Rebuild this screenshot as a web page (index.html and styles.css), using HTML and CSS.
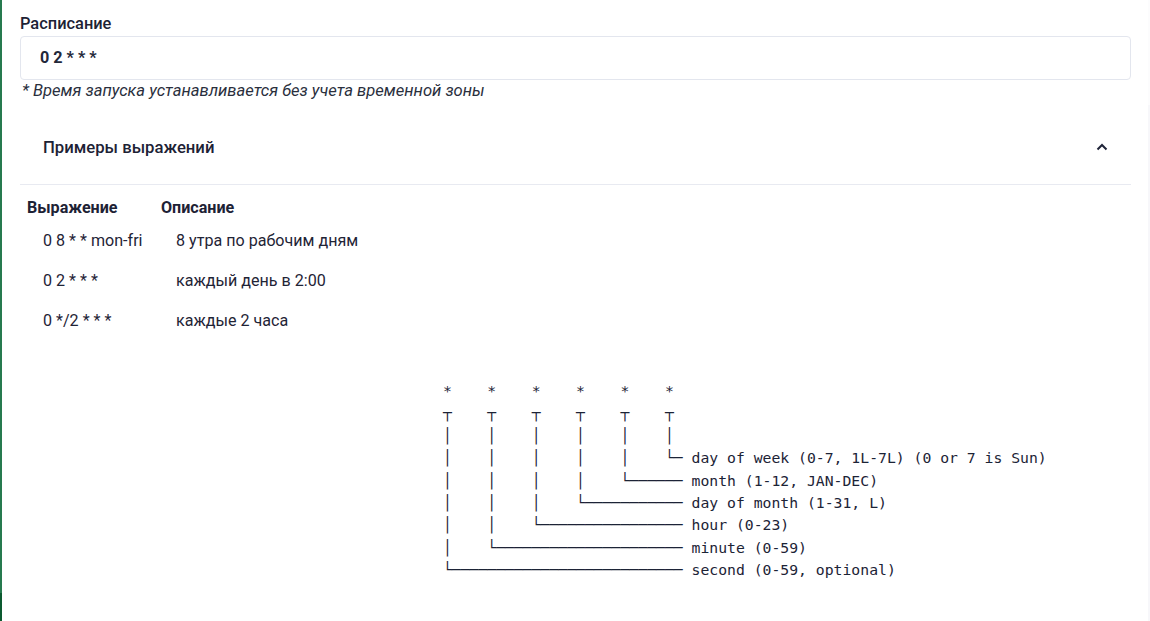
FILE: index.html
```html
<!DOCTYPE html>
<html lang="ru">
<head>
<meta charset="utf-8">
<title>Расписание</title>
<link rel="stylesheet" href="styles.css">
</head>
<body>
<div class="layout">
  <div class="sidebar-edge"><div class="edge-top"></div><div class="edge-bottom"></div></div>
  <main class="content">
    <label class="field-label" for="cron">Расписание</label>
    <div class="input-box" id="cron">0 2 * * *</div>
    <p class="hint">* Время запуска устанавливается без учета временной зоны</p>

    <section class="examples">
      <div class="examples-header">
        <span class="examples-title">Примеры выражений</span>
        <svg class="chevron" width="12" height="8" viewBox="0 0 12 8"><path d="M1.5 6.5 L6 2 L10.5 6.5" fill="none" stroke="#1f2438" stroke-width="2"/></svg>
      </div>
      <table class="examples-table">
        <thead>
          <tr><th class="col-expr">Выражение</th><th>Описание</th></tr>
        </thead>
        <tbody>
          <tr><td class="col-expr">0 8 * * mon-fri</td><td>8 утра по рабочим дням</td></tr>
          <tr><td class="col-expr">0 2 * * *</td><td>каждый день в 2:00</td></tr>
          <tr><td class="col-expr">0 */2 * * *</td><td>каждые 2 часа</td></tr>
        </tbody>
      </table>
      <pre class="cron-diagram"> *    *    *    *    *    *
 ┬    ┬    ┬    ┬    ┬    ┬
 │    │    │    │    │    │
 │    │    │    │    │    └─ day of week (0-7, 1L-7L) (0 or 7 is Sun)
 │    │    │    │    └────── month (1-12, JAN-DEC)
 │    │    │    └─────────── day of month (1-31, L)
 │    │    └──────────────── hour (0-23)
 │    └───────────────────── minute (0-59)
 └────────────────────────── second (0-59, optional)</pre>
    </section>
  </main>
  <div class="scroll-track"><div class="scroll-thumb"></div></div>
</div>
</body>
</html>
```

FILE: styles.css
```css
html, body {
  margin: 0;
  padding: 0;
  background: #ffffff;
}

body {
  font-family: Roboto, "Noto Sans", "Liberation Sans", sans-serif;
  color: #1f2436;
}

.layout {
  display: flex;
  height: 621px;
  overflow: hidden;
}

.sidebar-edge {
  width: 2px;
  display: flex;
  flex-direction: column;
  flex-shrink: 0;
}

.edge-top {
  flex: 1;
  background: #267a4f;
}

.edge-bottom {
  height: 28px;
  background: #0c5a30;
}

.content {
  flex: 1;
  padding: 14px 17px 0 18px;
}

.field-label {
  display: block;
  font-size: 16.4px;
  font-weight: 500;
  line-height: 20px;
  color: #1d2235;
}

.input-box {
  margin-top: 2px;
  height: 42px;
  border: 1px solid #e3e6ee;
  border-radius: 4px;
  padding: 0 19px;
  font-size: 16.2px;
  font-weight: 700;
  line-height: 42px;
  color: #23283a;
}

.hint {
  margin: 1px 0 0 2px;
  font-size: 16.6px;
  font-style: italic;
  line-height: 20px;
  color: #2a2f3d;
}

.examples {
  margin-top: 9px;
}

.examples-header {
  height: 74px;
  border-bottom: 1px solid #e8eaf1;
  display: flex;
  align-items: center;
  justify-content: space-between;
  padding: 0 23px;
}

.examples-title {
  font-size: 16.7px;
  font-weight: 500;
  color: #1d2235;
}

.chevron {
  display: block;
}

.examples-table {
  margin-top: 13px;
  border-collapse: collapse;
  font-size: 16.1px;
}

.examples-table th {
  text-align: left;
  font-weight: 700;
  line-height: 20px;
  padding: 0 0 3px 7px;
  color: #1d2235;
}

.examples-table td {
  line-height: 40px;
  padding: 0 0 0 22px;
  color: #1f2436;
}

.examples-table .col-expr {
  width: 127px;
}

.examples-table th.col-expr {
  padding-left: 7px;
}

.examples-table td.col-expr {
  padding-left: 23px;
  width: 111px;
}

.cron-diagram {
  margin: 39px 0 0 414px;
  font-family: "DejaVu Sans Mono", "Liberation Mono", monospace;
  font-size: 14.75px;
  line-height: 22.4px;
  color: #1c2336;
}

.scroll-track {
  width: 2px;
  flex-shrink: 0;
  background: #f7f7fa;
  display: flex;
  flex-direction: column;
}

.scroll-thumb {
  height: 105px;
  background: #fcfcfd;
}
```
